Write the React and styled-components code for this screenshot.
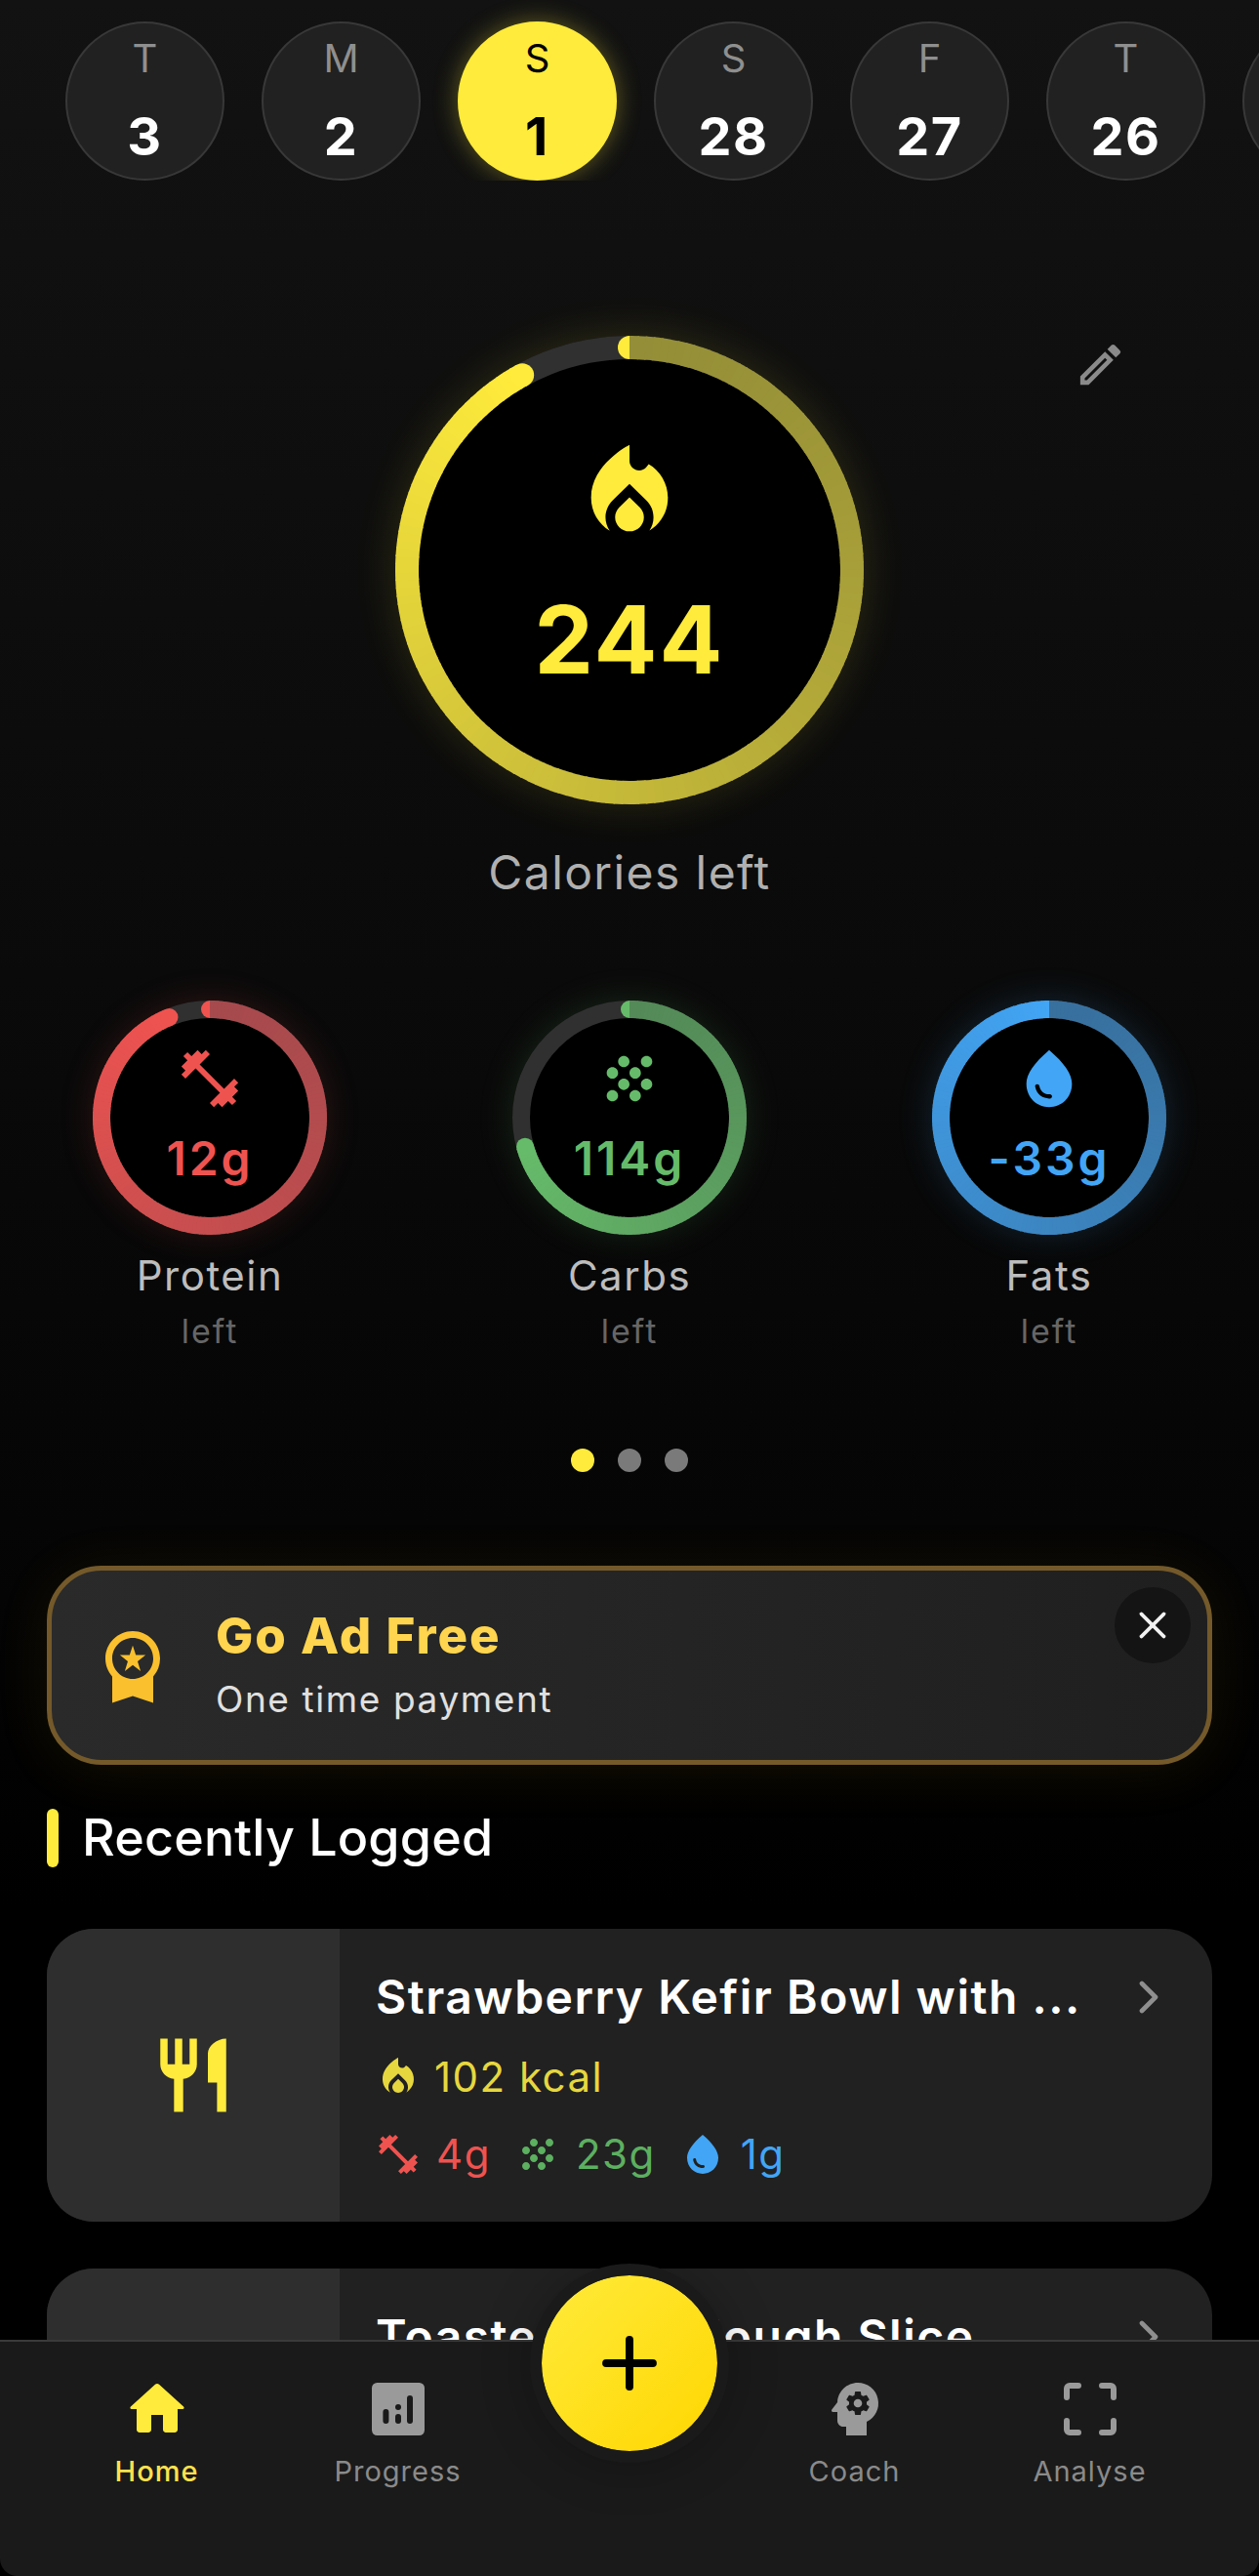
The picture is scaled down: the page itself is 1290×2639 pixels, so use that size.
import React from 'react';
import styled, { createGlobalStyle } from 'styled-components';
import {
  MdLocalFireDepartment,
  MdFitnessCenter,
  MdGrain,
  MdWaterDrop,
  MdOutlineEdit,
  MdWorkspacePremium,
  MdRestaurant,
  MdPsychology,
} from 'react-icons/md';
import { X, Plus, ChevronRight } from 'lucide-react';

const GlobalStyle = createGlobalStyle`
  html, body {
    margin: 0;
    padding: 0;
    background: #000;
  }
  body {
    font-family: Inter, "Liberation Sans", sans-serif;
  }
`;

const YELLOW = '#ffeb3b';
const RED = '#ef5350';
const GREEN = '#66bb6a';
const BLUE = '#42a5f5';

const Screen = styled.div`
  width: 1290px;
  height: 2639px;
  display: flex;
  flex-direction: column;
  overflow: hidden;
  position: relative;
  background: #000;
`;

const Content = styled.main`
  flex: 1;
  min-height: 0;
  overflow: hidden;
  background: linear-gradient(#121212 0, #0a0a0a 1000px, #050505 1560px, #000 1950px);
`;

const DateStrip = styled.div`
  display: flex;
  gap: 38px;
  padding: 22px 0 0 67px;
  overflow: hidden;
`;

const DayCircle = styled.div`
  flex: none;
  width: 163px;
  height: 163px;
  box-sizing: border-box;
  border-radius: 50%;
  display: flex;
  flex-direction: column;
  align-items: center;
  padding-top: 12px;
  background: ${(p) => (p.$active ? YELLOW : '#212121')};
  border: 2px solid ${(p) => (p.$active ? YELLOW : '#383838')};
  box-shadow: ${(p) => (p.$active ? '0 0 24px rgba(255, 235, 59, 0.35)' : 'none')};
`;

const DayLetter = styled.span`
  font-size: 40px;
  line-height: 48px;
  color: ${(p) => (p.$active ? '#000' : '#8f8f8f')};
`;

const DayNumber = styled.span`
  margin-top: 28px;
  font-size: 54px;
  line-height: 56px;
  font-weight: 700;
  letter-spacing: 1.5px;
  color: ${(p) => (p.$active ? '#000' : '#fff')};
`;

const Hero = styled.section`
  position: relative;
  margin-top: 159px;
  display: flex;
  flex-direction: column;
  align-items: center;
`;

const EditButton = styled.div`
  position: absolute;
  top: 2px;
  left: 1100px;
  display: flex;
  color: #8a8a8a;
`;

const RingBox = styled.div`
  position: relative;
  flex: none;
  width: ${(p) => p.$size}px;
  height: ${(p) => p.$size}px;
  border-radius: 50%;
  box-shadow: 0 0 ${(p) => p.$glow}px ${(p) => p.$glowColor};
`;

const RingSvg = styled.svg`
  position: absolute;
  inset: 0;
  display: block;
`;

const RingInner = styled.div`
  position: absolute;
  inset: 0;
  display: flex;
  flex-direction: column;
  align-items: center;
  padding-top: ${(p) => p.$top}px;
  color: ${(p) => p.$color};
`;

const HeroNumber = styled.div`
  margin-top: 43px;
  font-size: 96px;
  line-height: 96px;
  font-weight: 700;
  letter-spacing: 2px;
`;

const HeroLabel = styled.div`
  margin-top: 42px;
  font-size: 48px;
  line-height: 56px;
  letter-spacing: 1.4px;
  color: #b0b0b0;
`;

const MacroGrid = styled.section`
  margin-top: 103px;
  display: grid;
  grid-template-columns: repeat(3, 430px);
`;

const MacroItem = styled.div`
  display: flex;
  flex-direction: column;
  align-items: center;
`;

const MacroValue = styled.div`
  margin-top: 24px;
  font-size: 48px;
  line-height: 46px;
  font-weight: 600;
  letter-spacing: 3px;
`;

const MacroLabel = styled.div`
  margin-top: 18px;
  font-size: 42px;
  line-height: 48px;
  letter-spacing: 1.5px;
  color: #bdbdbd;
`;

const MacroSub = styled.div`
  margin-top: 13px;
  font-size: 34px;
  line-height: 40px;
  letter-spacing: 2px;
  color: #666;
`;

const Pager = styled.div`
  margin-top: 100px;
  display: flex;
  justify-content: center;
  gap: 24px;
`;

const PagerDot = styled.span`
  width: 24px;
  height: 24px;
  border-radius: 50%;
  background: ${(p) => (p.$active ? YELLOW : '#7a7a7a')};
`;

const PromoCard = styled.section`
  position: relative;
  margin: 96px 48px 0;
  height: 204px;
  box-sizing: border-box;
  display: flex;
  align-items: center;
  padding-left: 41px;
  border: 5px solid #74592a;
  border-radius: 56px;
  background: linear-gradient(90deg, #2a2a2a, #1f1f1f);
  box-shadow: 0 6px 60px rgba(255, 193, 7, 0.08);
`;

const PromoIcon = styled.div`
  display: flex;
  flex: none;
  color: #fbc02d;
`;

const PromoText = styled.div`
  margin: 0 0 3px 43px;
  display: flex;
  flex-direction: column;
  gap: 13px;
`;

const PromoTitle = styled.div`
  font-size: 51px;
  line-height: 60px;
  font-weight: 800;
  letter-spacing: 2px;
  color: #ffd54f;
`;

const PromoSub = styled.div`
  font-size: 37px;
  line-height: 44px;
  letter-spacing: 1.6px;
  color: #e0e0e0;
`;

const CloseButton = styled.div`
  position: absolute;
  top: 17px;
  right: 17px;
  width: 78px;
  height: 78px;
  border-radius: 50%;
  display: flex;
  align-items: center;
  justify-content: center;
  background: #141414;
  color: #f2f2f2;
`;

const SectionHeader = styled.div`
  margin: 45px 48px 0;
  display: flex;
  align-items: center;
  gap: 24px;
`;

const SectionBar = styled.span`
  width: 12px;
  height: 60px;
  border-radius: 6px;
  background: ${YELLOW};
`;

const SectionTitle = styled.h2`
  margin: 0;
  font-size: 52px;
  line-height: 60px;
  font-weight: 500;
  letter-spacing: 0.2px;
  color: #fff;
`;

const FoodList = styled.div`
  margin: 63px 48px 0;
  display: flex;
  flex-direction: column;
  gap: 48px;
`;

const FoodCard = styled.article`
  flex: none;
  height: 300px;
  display: flex;
  overflow: hidden;
  border-radius: 48px;
  background: #212121;
`;

const FoodThumb = styled.div`
  flex: none;
  width: 300px;
  display: flex;
  align-items: center;
  justify-content: center;
  background: #2e2e2e;
  color: ${YELLOW};
`;

const FoodBody = styled.div`
  flex: 1;
  min-width: 0;
  padding: 42px 37px 0 37px;
  display: flex;
  flex-direction: column;
`;

const FoodTitleRow = styled.div`
  display: flex;
  align-items: center;
  justify-content: space-between;
  color: #8f8f8f;
`;

const FoodTitle = styled.h3`
  margin: 0;
  font-size: 48px;
  line-height: 56px;
  font-weight: 600;
  letter-spacing: 1.5px;
  white-space: nowrap;
  color: #fff;
`;

const StatRow = styled.div`
  margin: ${(p) => p.$gap}px 0 0 -1px;
  display: flex;
  align-items: center;
  height: 44px;
`;

const Stat = styled.span`
  display: inline-flex;
  align-items: center;
  gap: ${(p) => p.$gap ?? 15}px;
  margin-right: 24px;
  font-size: 42px;
  line-height: 44px;
  letter-spacing: 1.5px;
  color: ${(p) => p.$color};
`;

const BottomNav = styled.nav`
  position: relative;
  flex: none;
  height: 242px;
  box-sizing: border-box;
  display: grid;
  grid-template-columns: 247px 247px 224px 241px 241px;
  padding: 33px 0 0 37px;
  background: #1a1a1a;
  border-top: 2px solid #3a3a3a;
  border-radius: 0 0 18px 18px;
`;

const NavItem = styled.div`
  display: flex;
  flex-direction: column;
  align-items: center;
  color: ${(p) => (p.$active ? YELLOW : '#9a9a9a')};
`;

const NavLabel = styled.span`
  margin-top: 11px;
  font-size: 29px;
  line-height: 34px;
  letter-spacing: 1px;
  font-weight: ${(p) => (p.$active ? 500 : 400)};
  color: ${(p) => (p.$active ? '#ffe24d' : '#8a8a8a')};
`;

const AddButton = styled.div`
  position: absolute;
  top: -80px;
  left: 543px;
  width: 204px;
  height: 204px;
  box-sizing: border-box;
  border-radius: 50%;
  border: 12px solid #1a1a1a;
  display: flex;
  align-items: center;
  justify-content: center;
  background: linear-gradient(135deg, #ffeb3b, #ffd600);
  background-clip: padding-box;
  box-shadow: 0 4px 50px rgba(0, 0, 0, 0.25);
  color: #000;
`;

const mix = (a, b, t) => {
  const pa = [1, 3, 5].map((i) => parseInt(a.slice(i, i + 2), 16));
  const pb = [1, 3, 5].map((i) => parseInt(b.slice(i, i + 2), 16));
  return `rgb(${pa.map((v, i) => Math.round(v + (pb[i] - v) * t)).join(',')})`;
};

const polar = (c, r, deg) => {
  const rad = ((deg - 90) * Math.PI) / 180;
  return [c + r * Math.cos(rad), c + r * Math.sin(rad)];
};

// sweep gradient arc, cut into short strokes since svg has no conic paint
const SweepRing = ({ size, stroke, progress, from, to }) => {
  const c = size / 2;
  const r = c - stroke / 2;
  const sweep = progress * 360;
  const count = Math.ceil(sweep / 2);
  const full = progress >= 1;
  const segments = [];
  for (let i = 0; i < count; i++) {
    const a0 = (i / count) * sweep;
    const a1 = Math.min(((i + 1) / count) * sweep + 0.4, sweep);
    const [x0, y0] = polar(c, r, a0);
    const [x1, y1] = polar(c, r, a1);
    segments.push(
      <path
        key={i}
        d={`M${x0} ${y0}A${r} ${r} 0 0 1 ${x1} ${y1}`}
        fill="none"
        stroke={mix(from, to, Math.pow(i / (count - 1), 1.3))}
        strokeWidth={stroke}
      />
    );
  }
  const [sx, sy] = polar(c, r, 0);
  const [ex, ey] = polar(c, r, sweep);
  return (
    <RingSvg width={size} height={size} viewBox={`0 0 ${size} ${size}`}>
      <circle cx={c} cy={c} r={c - stroke + 0.5} fill="#000" />
      <circle cx={c} cy={c} r={r} fill="none" stroke="#303030" strokeWidth={stroke} />
      {!full && <circle cx={sx} cy={sy} r={stroke / 2} fill={to} />}
      {segments}
      {!full && <circle cx={ex} cy={ey} r={stroke / 2} fill={to} />}
    </RingSvg>
  );
};

const HomeIcon = () => (
  <svg width="72" height="72" viewBox="0 0 24 24" fill="currentColor">
    <path d="M10 19v-5h4v5c0 .55.45 1 1 1h3c.55 0 1-.45 1-1v-7h1.7c.46 0 .68-.57.33-.87L12.67 3.6c-.38-.34-.96-.34-1.34 0l-8.36 7.53c-.34.3-.13.87.33.87H5v7c0 .55.45 1 1 1h3c.55 0 1-.45 1-1z" />
  </svg>
);

const ProgressIcon = () => (
  <svg width="72" height="72" viewBox="0 0 24 24">
    <rect x="3" y="3" width="18" height="18" rx="1.8" fill="currentColor" />
    <rect x="6.8" y="12" width="2" height="5" rx="1" fill="#1a1a1a" />
    <rect x="11" y="10.3" width="2" height="2" rx="1" fill="#1a1a1a" />
    <rect x="11" y="13.7" width="2" height="3.3" rx="1" fill="#1a1a1a" />
    <rect x="15" y="7.3" width="2" height="9.7" rx="1" fill="#1a1a1a" />
  </svg>
);

const ScanIcon = () => (
  <svg width="72" height="72" viewBox="0 0 24 24" fill="none" stroke="currentColor" strokeWidth="2" strokeLinecap="round">
    <path d="M4 8V5a1 1 0 0 1 1-1h3" />
    <path d="M16 4h3a1 1 0 0 1 1 1v3" />
    <path d="M20 16v3a1 1 0 0 1-1 1h-3" />
    <path d="M8 20H5a1 1 0 0 1-1-1v-3" />
  </svg>
);

const days = [
  ['T', 3],
  ['M', 2],
  ['S', 1, true],
  ['S', 28],
  ['F', 27],
  ['T', 26],
  ['W', 25],
];

const macros = [
  { name: 'Protein', value: '12g', color: RED, dim: '#a64a4e', glow: 'rgba(239,83,80,0.16)', progress: 0.939, Icon: MdFitnessCenter },
  { name: 'Carbs', value: '114g', color: GREEN, dim: '#548a58', glow: 'rgba(102,187,106,0.16)', progress: 0.707, Icon: MdGrain },
  { name: 'Fats', value: '-33g', color: BLUE, dim: '#38709e', glow: 'rgba(66,165,245,0.18)', progress: 1, Icon: MdWaterDrop },
];

export default function App() {
  return (
    <Screen>
      <GlobalStyle />
      <Content>
        <DateStrip>
          {days.map(([letter, num, active]) => (
            <DayCircle key={num} $active={active}>
              <DayLetter $active={active}>{letter}</DayLetter>
              <DayNumber $active={active}>{num}</DayNumber>
            </DayCircle>
          ))}
        </DateStrip>

        <Hero>
          <EditButton>
            <MdOutlineEdit size={55} />
          </EditButton>
          <RingBox $size={480} $glow={44} $glowColor="rgba(255,235,59,0.14)">
            <SweepRing size={480} stroke={24} progress={0.92} from="#948e38" to={YELLOW} />
            <RingInner $top={102} $color={YELLOW}>
              <MdLocalFireDepartment size={118} />
              <HeroNumber>244</HeroNumber>
            </RingInner>
          </RingBox>
          <HeroLabel>Calories left</HeroLabel>
        </Hero>

        <MacroGrid>
          {macros.map(({ name, value, color, dim, glow, progress, Icon }) => (
            <MacroItem key={name}>
              <RingBox $size={240} $glow={36} $glowColor={glow}>
                <SweepRing size={240} stroke={18} progress={progress} from={dim} to={color} />
                <RingInner $top={45} $color={color}>
                  <Icon size={70} />
                  <MacroValue>{value}</MacroValue>
                </RingInner>
              </RingBox>
              <MacroLabel>{name}</MacroLabel>
              <MacroSub>left</MacroSub>
            </MacroItem>
          ))}
        </MacroGrid>

        <Pager>
          <PagerDot $active />
          <PagerDot />
          <PagerDot />
        </Pager>

        <PromoCard>
          <PromoIcon>
            <MdWorkspacePremium size={84} />
          </PromoIcon>
          <PromoText>
            <PromoTitle>Go Ad Free</PromoTitle>
            <PromoSub>One time payment</PromoSub>
          </PromoText>
          <CloseButton>
            <X size={46} strokeWidth={2} />
          </CloseButton>
        </PromoCard>

        <SectionHeader>
          <SectionBar />
          <SectionTitle>Recently Logged</SectionTitle>
        </SectionHeader>

        <FoodList>
          <FoodCard>
            <FoodThumb>
              <MdRestaurant size={90} />
            </FoodThumb>
            <FoodBody>
              <FoodTitleRow>
                <FoodTitle>Strawberry Kefir Bowl with ...</FoodTitle>
                <ChevronRight size={56} strokeWidth={2} />
              </FoodTitleRow>
              <StatRow $gap={32}>
                <Stat $color="#e6d73f" $gap={13}>
                  <MdLocalFireDepartment size={48} />
                  102 kcal
                </Stat>
              </StatRow>
              <StatRow $gap={35}>
                <Stat $color={RED}>
                  <MdFitnessCenter size={48} />
                  4g
                </Stat>
                <Stat $color="#5cb060">
                  <MdGrain size={48} />
                  23g
                </Stat>
                <Stat $color={BLUE}>
                  <MdWaterDrop size={48} />
                  1g
                </Stat>
              </StatRow>
            </FoodBody>
          </FoodCard>
          <FoodCard>
            <FoodThumb />
            <FoodBody>
              <FoodTitleRow>
                <FoodTitle>Toasted Sourdough Slice</FoodTitle>
                <ChevronRight size={56} strokeWidth={2} />
              </FoodTitleRow>
            </FoodBody>
          </FoodCard>
        </FoodList>
      </Content>

      <BottomNav>
        <NavItem $active>
          <HomeIcon />
          <NavLabel $active>Home</NavLabel>
        </NavItem>
        <NavItem>
          <ProgressIcon />
          <NavLabel>Progress</NavLabel>
        </NavItem>
        <span />
        <NavItem>
          <MdPsychology size={72} />
          <NavLabel>Coach</NavLabel>
        </NavItem>
        <NavItem>
          <ScanIcon />
          <NavLabel>Analyse</NavLabel>
        </NavItem>
        <AddButton>
          <Plus size={82} strokeWidth={2.33} />
        </AddButton>
      </BottomNav>
    </Screen>
  );
}
